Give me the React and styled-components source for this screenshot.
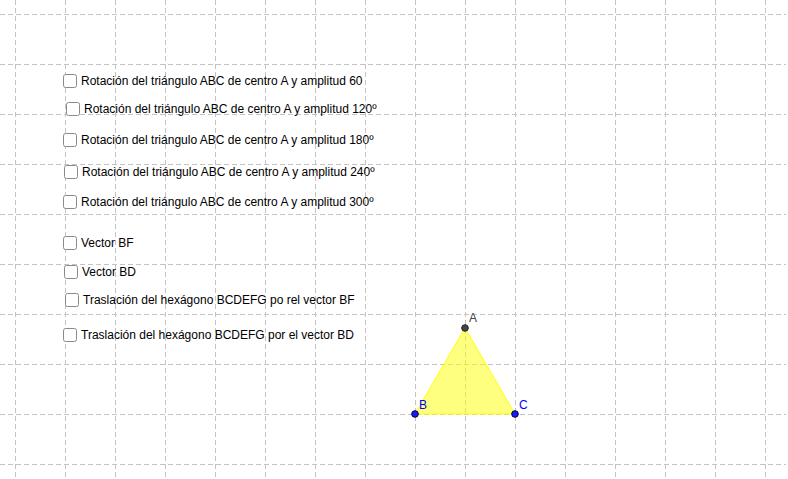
import React from "react";
import styled, { createGlobalStyle } from "styled-components";

const Global = createGlobalStyle`
  html, body { margin: 0; padding: 0; background: #ffffff; }
  body { font-family: "Liberation Sans", Arial, sans-serif; }
`;

const Canvas = styled.div`
  position: relative;
  width: 788px;
  height: 479px;
  overflow: hidden;
  background: #ffffff;
`;

const Drawing = styled.svg`
  position: absolute;
  left: 0;
  top: 0;
  display: block;
`;

const CheckItem = styled.label`
  position: absolute;
  display: flex;
  align-items: center;
  gap: 4px;
  font-family: "Liberation Sans", Arial, sans-serif;
  font-size: 12px;
  line-height: 14px;
  color: #000000;
  white-space: nowrap;
  cursor: pointer;
`;

const Box = styled.span`
  box-sizing: border-box;
  width: 14px;
  height: 14px;
  border: 1.5px solid #8a8a8a;
  border-radius: 2.5px;
  background: #ffffff;
  flex: none;
`;

const items = [
  { x: 63, y: 74, t: "Rotación del triángulo ABC de centro A y amplitud 60" },
  { x: 66, y: 102, t: "Rotación del triángulo ABC de centro A y amplitud 120º" },
  { x: 63, y: 133, t: "Rotación del triángulo ABC de centro A y amplitud 180º" },
  { x: 64, y: 165, t: "Rotación del triángulo ABC de centro A y amplitud 240º" },
  { x: 63, y: 195, t: "Rotación del triángulo ABC de centro A y amplitud 300º" },
  { x: 63, y: 236, t: "Vector BF" },
  { x: 64, y: 265, t: "Vector BD" },
  { x: 65, y: 293, t: "Traslación del hexágono BCDEFG po rel vector BF" },
  { x: 63, y: 328, t: "Traslación del hexágono BCDEFG por el vector BD" },
];

const W = 788;
const H = 479;

function Grid() {
  const xs = [];
  for (let x = 15; x < W; x += 50) xs.push(x);
  const ys = [];
  for (let y = 14; y < H; y += 50) ys.push(y);
  return (
    <g stroke="#c4c4c4" strokeWidth="1" strokeDasharray="5 3" shapeRendering="crispEdges">
      {xs.map((x) => (
        <line key={"v" + x} x1={x + 0.5} y1={0} x2={x + 0.5} y2={H} />
      ))}
      {ys.map((y) => (
        <line key={"h" + y} x1={0} y1={y + 0.5} x2={786} y2={y + 0.5} />
      ))}
    </g>
  );
}

function Triangle() {
  const A = [465, 328];
  const B = [415, 414];
  const C = [515, 414];
  return (
    <g>
      <polygon
        points={`${A.join(",")} ${B.join(",")} ${C.join(",")}`}
        fill="rgba(255,255,0,0.5)"
        stroke="#ffff00"
        strokeWidth="1"
      />
      <circle cx={A[0]} cy={A[1]} r="3.3" fill="#444444" stroke="#222222" strokeWidth="1" />
      <circle cx={B[0]} cy={B[1]} r="3.3" fill="#1a1aff" stroke="#000033" strokeWidth="1" />
      <circle cx={C[0]} cy={C[1]} r="3.3" fill="#1a1aff" stroke="#000033" strokeWidth="1" />
      <g fontFamily="Liberation Sans, Arial, sans-serif" fontSize="12">
        <text x="469" y="322" fill="#444444">A</text>
        <text x="419" y="409" fill="#0000ff">B</text>
        <text x="519" y="409" fill="#0000ff">C</text>
      </g>
    </g>
  );
}

export default function App() {
  return (
    <>
      <Global />
      <Canvas>
        <Drawing width={W} height={H} viewBox={`0 0 ${W} ${H}`}>
          <Grid />
          <Triangle />
        </Drawing>
        {items.map((it, i) => (
          <CheckItem key={i} style={{ left: it.x, top: it.y }}>
            <Box />
            <span>{it.t}</span>
          </CheckItem>
        ))}
      </Canvas>
    </>
  );
}
